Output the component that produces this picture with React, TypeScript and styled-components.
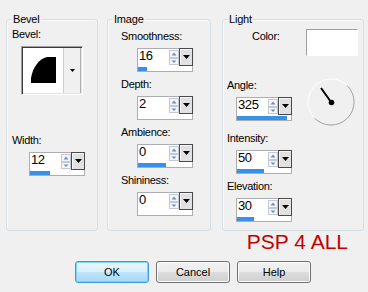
import React from "react";
import styled, { createGlobalStyle } from "styled-components";

type SpinSpec = {
  label: string;
  value: string;
  fill: number;
};

const GlobalStyle = createGlobalStyle`
  html, body {
    margin: 0;
    padding: 0;
    background: #f0f0f0;
  }
`;

const DropArrow: React.FunctionComponent<{ w?: number; h?: number }> = ({ w = 7, h = 4 }) => (
  <svg width={w} height={h} viewBox={`0 0 ${w} ${h}`}>
    <polygon points={`0,0 ${w},0 ${w / 2},${h}`} fill="#000" />
  </svg>
);

const SpinArrows = () => (
  <svg width="10" height="17" viewBox="0 0 10 17">
    <rect x="0.5" y="1.5" width="9" height="7" fill="#f4f6fa" stroke="#c3cad6" />
    <rect x="0.5" y="9.5" width="9" height="6" fill="#f4f6fa" stroke="#c3cad6" />
    <polygon points="2.5,6.5 7.5,6.5 5,3.5" fill="#6f8cc4" />
    <polygon points="2.5,11.5 7.5,11.5 5,14" fill="#6f8cc4" />
  </svg>
);

const SpinBox: React.FunctionComponent<{ value: string; fill: number }> = ({ value, fill }) => (
  <Styled.Spin>
    <Styled.SpinRow>
      <Styled.SpinValue>{value}</Styled.SpinValue>
      <SpinArrows />
      <Styled.Drop>
        <DropArrow />
      </Styled.Drop>
    </Styled.SpinRow>
    <Styled.Bar>
      <Styled.BarFill style={{ width: fill }} />
    </Styled.Bar>
  </Styled.Spin>
);

const Field: React.FunctionComponent<SpinSpec & { indent: number }> = ({ label, value, fill, indent }) => (
  <Styled.Field>
    <Styled.Label>{label}</Styled.Label>
    <Styled.SpinSlot $indent={indent}>
      <SpinBox value={value} fill={fill} />
    </Styled.SpinSlot>
  </Styled.Field>
);

const Dial = () => (
  <svg width="48" height="49" viewBox="0 0 48 49">
    <path d="M7.7,40.3 A23,23 0 0 1 40.3,7.7" fill="none" stroke="#ffffff" strokeWidth="1" />
    <path d="M40.3,7.7 A23,23 0 0 1 7.7,40.3" fill="none" stroke="#a0a0a0" strokeWidth="1" />
    <line x1="14" y1="10" x2="24" y2="24" stroke="#000" strokeWidth="2" />
    <circle cx="24.5" cy="24.5" r="2.8" fill="#000" />
  </svg>
);

const imageFields: SpinSpec[] = [
  { label: "Smoothness:", value: "16", fill: 9 },
  { label: "Depth:", value: "2", fill: 0 },
  { label: "Ambience:", value: "0", fill: 28 },
  { label: "Shininess:", value: "0", fill: 0 },
];

const lightFields: SpinSpec[] = [
  { label: "Intensity:", value: "50", fill: 27 },
  { label: "Elevation:", value: "30", fill: 17 },
];

export default function App() {
  return (
    <Styled.Page>
      <GlobalStyle />
      <Styled.Groups>
        <Styled.Group $width={92}>
          <Styled.Legend>Bevel</Styled.Legend>
          <Styled.Label style={{ margin: "8px 0 0 5px" }}>Bevel:</Styled.Label>
          <Styled.Preview>
            <Styled.PreviewCanvas>
              <svg width="40" height="45" viewBox="0 0 40 45">
                <path d="M8,35 L8,30 C10,19 16,11 24,9 L33,9 L33,35 Z" fill="#000" />
              </svg>
            </Styled.PreviewCanvas>
            <Styled.PreviewDrop>
              <DropArrow w={5} h={3} />
            </Styled.PreviewDrop>
          </Styled.Preview>
          <Styled.Stack $pad={5} $top={39}>
            <Field label="Width:" value="12" fill={20} indent={17} />
          </Styled.Stack>
        </Styled.Group>

        <Styled.Group $width={104} $gap={9}>
          <Styled.Legend>Image</Styled.Legend>
          <Styled.Stack $pad={13} $top={10}>
            {imageFields.map((f) => (
              <Field key={f.label} {...f} indent={16} />
            ))}
          </Styled.Stack>
        </Styled.Group>

        <Styled.Group $width={142} $gap={11}>
          <Styled.Legend>Light</Styled.Legend>
          <Styled.ColorRow>
            <Styled.Label style={{ margin: "1px 0 0 29px" }}>Color:</Styled.Label>
            <Styled.Swatch />
          </Styled.ColorRow>
          <Styled.AngleRow>
            <Styled.Stack $pad={4} $top={0}>
              <Field label="Angle:" value="325" fill={50} indent={9} />
            </Styled.Stack>
            <Styled.DialSlot>
              <Dial />
            </Styled.DialSlot>
          </Styled.AngleRow>
          <Styled.Stack $pad={4} $top={5}>
            {lightFields.map((f) => (
              <Field key={f.label} {...f} indent={9} />
            ))}
          </Styled.Stack>
        </Styled.Group>
      </Styled.Groups>

      <Styled.Brand>PSP 4 ALL</Styled.Brand>

      <Styled.Buttons>
        <Styled.Button $primary>OK</Styled.Button>
        <Styled.Button>Cancel</Styled.Button>
        <Styled.Button>Help</Styled.Button>
      </Styled.Buttons>
    </Styled.Page>
  );
}

const Styled = {
  Page: styled.div`
    width: 368px;
    height: 292px;
    overflow: hidden;
    background: #f0f0f0;
    color: #000;
    font-family: "Liberation Sans", Arial, sans-serif;
    font-size: 11px;
    display: flex;
    flex-direction: column;
  `,
  Groups: styled.div`
    display: flex;
    align-items: flex-start;
    padding: 19px 0 0 6px;
  `,
  Group: styled.section<{ $width: number; $gap?: number }>`
    position: relative;
    box-sizing: border-box;
    width: ${(p) => p.$width}px;
    height: 212px;
    margin-left: ${(p) => p.$gap ?? 0}px;
    border: 1px solid #d5dfe5;
    border-radius: 3px;
    box-shadow: inset 1px 1px 0 #fafafa;
    display: flex;
    flex-direction: column;
  `,
  Legend: styled.span`
    position: absolute;
    top: -7px;
    left: 5px;
    padding: 0 1px;
    background: #f0f0f0;
    line-height: 13px;
    letter-spacing: -0.2px;
  `,
  Label: styled.div`
    line-height: 13px;
    letter-spacing: -0.3px;
    white-space: nowrap;
  `,
  Stack: styled.div<{ $pad: number; $top: number }>`
    display: flex;
    flex-direction: column;
    gap: 6px;
    padding-left: ${(p) => p.$pad}px;
    margin-top: ${(p) => p.$top}px;
  `,
  Field: styled.div`
    display: flex;
    flex-direction: column;
    gap: 5px;
  `,
  SpinSlot: styled.div<{ $indent: number }>`
    margin-left: ${(p) => p.$indent}px;
  `,
  Spin: styled.div`
    box-sizing: border-box;
    width: 56px;
    height: 24px;
    border: 1px solid #abadb3;
    background: #fff;
    display: flex;
    flex-direction: column;
    gap: 1px;
  `,
  SpinRow: styled.div`
    display: flex;
    height: 17px;
  `,
  SpinValue: styled.div`
    flex: 1;
    padding-left: 1px;
    font-size: 13px;
    line-height: 13px;
    letter-spacing: -0.4px;
  `,
  Drop: styled.div`
    box-sizing: border-box;
    width: 14px;
    height: 18px;
    margin: -1px -1px 0 0;
    border: 1px solid #4a4a4a;
    background: #e1e1e1;
    box-shadow: inset 1px 1px 0 #f6f6f6;
    display: flex;
    align-items: center;
    justify-content: center;
  `,
  Bar: styled.div`
    height: 4px;
    background: #fff;
  `,
  BarFill: styled.div`
    height: 100%;
    background: #3790ea;
  `,
  Preview: styled.div`
    box-sizing: border-box;
    width: 62px;
    height: 49px;
    margin: 5px 0 0 14px;
    border: 1px solid;
    border-color: #a0a0a0 #ffffff #ffffff #a0a0a0;
    box-shadow: inset 1px 1px 0 #3a3a3a, inset -1px -1px 0 #e3e3e3;
    background: #fff;
    display: flex;
    padding: 1px 1px 1px 1px;
  `,
  PreviewCanvas: styled.div`
    flex: 1;
  `,
  PreviewDrop: styled.div`
    width: 16px;
    border-left: 1px solid #cfcfcf;
    border-right: 1px solid #b0b0b0;
    background: #f0f0f0;
    display: flex;
    align-items: center;
    justify-content: center;
  `,
  ColorRow: styled.div`
    display: flex;
    align-items: flex-start;
    margin-top: 9px;
  `,
  Swatch: styled.div`
    box-sizing: border-box;
    width: 52px;
    height: 27px;
    margin: 0 5px 0 auto;
    background: #fff;
    border-style: solid;
    border-width: 1px;
    border-color: #a0a0a0 #fff #fff #a0a0a0;
  `,
  AngleRow: styled.div`
    display: flex;
    align-items: flex-start;
    margin-top: 23px;
  `,
  DialSlot: styled.div`
    margin: -1px 8px 0 auto;
    line-height: 0;
  `,
  Brand: styled.div`
    padding-right: 20px;
    text-align: right;
    font-size: 21px;
    line-height: 21px;
    color: #c00000;
  `,
  Buttons: styled.div`
    display: flex;
    gap: 7px;
    padding-left: 75px;
    margin-top: 9px;
  `,
  Button: styled.button<{ $primary?: boolean }>`
    box-sizing: border-box;
    width: 74px;
    height: 22px;
    padding: 0;
    font-family: inherit;
    font-size: 11px;
    color: #000;
    border-radius: 3px;
    border: 1px solid ${(p) => (p.$primary ? "#3c9be0" : "#707070")};
    background: ${(p) =>
      p.$primary
        ? "linear-gradient(#eaf6fd 0%, #d9f0fc 49%, #bee6fd 50%, #a7d9f5 100%)"
        : "linear-gradient(#f2f2f2 0%, #ebebeb 49%, #dddddd 50%, #cfcfcf 100%)"};
    box-shadow: inset 0 0 0 1px ${(p) => (p.$primary ? "#7fd1f7" : "#fcfcfc")};
  `,
};
